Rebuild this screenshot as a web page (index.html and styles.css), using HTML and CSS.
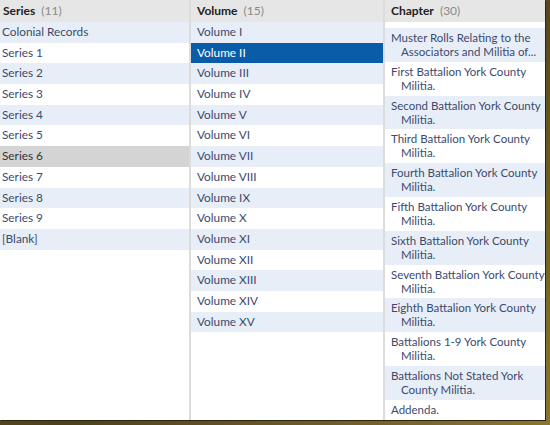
FILE: index.html
```html
<!DOCTYPE html>
<html>
<head>
<meta charset="utf-8">
<link rel="stylesheet" href="styles.css">
</head>
<body>
<div class="frame">
  <div class="browser">
    <div class="col col-series">
      <div class="head"><b>Series</b> <span class="count">(11)</span></div>
      <ul class="list">
        <li class="alt">Colonial Records</li>
        <li>Series 1</li>
        <li class="alt">Series 2</li>
        <li>Series 3</li>
        <li class="alt">Series 4</li>
        <li>Series 5</li>
        <li class="sel-gray">Series 6</li>
        <li>Series 7</li>
        <li class="alt">Series 8</li>
        <li>Series 9</li>
        <li class="alt">[Blank]</li>
      </ul>
    </div>
    <div class="col col-volume">
      <div class="head"><b>Volume</b> <span class="count">(15)</span></div>
      <ul class="list">
        <li class="alt">Volume I</li>
        <li class="sel-blue">Volume II</li>
        <li class="alt">Volume III</li>
        <li>Volume IV</li>
        <li class="alt">Volume V</li>
        <li>Volume VI</li>
        <li class="alt">Volume VII</li>
        <li>Volume VIII</li>
        <li class="alt">Volume IX</li>
        <li>Volume X</li>
        <li class="alt">Volume XI</li>
        <li>Volume XII</li>
        <li class="alt">Volume XIII</li>
        <li>Volume XIV</li>
        <li class="alt">Volume XV</li>
      </ul>
    </div>
    <div class="col col-chapter">
      <div class="head"><b>Chapter</b> <span class="count">(30)</span></div>
      <ul class="list chapters">
        <li class="alt">Muster Rolls Relating to the Associators and Militia of...</li>
        <li>First Battalion York County Militia.</li>
        <li class="alt">Second Battalion York County Militia.</li>
        <li>Third Battalion York County Militia.</li>
        <li class="alt">Fourth Battalion York County Militia.</li>
        <li>Fifth Battalion York County Militia.</li>
        <li class="alt">Sixth Battalion York County Militia.</li>
        <li>Seventh Battalion York County Militia.</li>
        <li class="alt">Eighth Battalion York County Militia.</li>
        <li>Battalions 1-9 York County Militia.</li>
        <li class="alt">Battalions Not Stated York County Militia.</li>
        <li>Addenda.</li>
      </ul>
    </div>
  </div>
</div>
</body>
</html>
```
FILE: styles.css
```css
* { box-sizing: border-box; }
html, body { margin: 0; padding: 0; background: #fff; }
body { font-family: Lato, "DejaVu Sans", sans-serif; font-size: 11.8px; }

.frame {
  width: 550px;
  height: 425px;
  background: linear-gradient(135deg, #7a6328 0%, #4e401a 50%, #8c7330 100%);
  padding: 0 5px 5px 0;
}
.browser {
  width: 545px;
  height: 420px;
  background: #fff;
  display: grid;
  grid-template-columns: 189px 194px 162px;
  box-shadow: 1px 1px 0 #2a2410;
}
.col { display: flex; flex-direction: column; overflow: hidden; }
.col-volume, .col-chapter { border-left: 2px solid #dcdcdc; }

.head {
  height: 22px;
  line-height: 22px;
  background: #e6e6e6;
  color: #222;
  padding-left: 3px;
  white-space: nowrap;
  font-size: 12px;
}
.col-volume .head, .col-chapter .head { padding-left: 6px; }
.head b { font-weight: 700; }
.count { color: #8a8a8a; margin-left: 3px; }

.list { list-style: none; margin: 0; padding: 0; }
.list li {
  height: 20.7px;
  line-height: 20.7px;
  color: #3b4a6e;
  padding-left: 2px;
  white-space: nowrap;
}
.col-volume .list li { padding-left: 6px; }
.list li.alt { background: #e8eef7; }
.list li.sel-gray { background: #d4d4d4; color: #333; }
.list li.sel-blue { background: #0b5ca8; color: #fff; }

.chapters { padding-top: 6px; }
.chapters li {
  height: auto;
  font-size: 11.5px;
  line-height: 14px;
  padding: 3px 0 2.8px 16px;
  text-indent: -10px;
  white-space: normal;
}
```
